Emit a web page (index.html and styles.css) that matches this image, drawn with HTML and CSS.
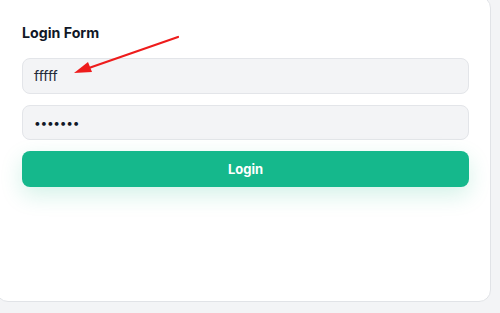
FILE: index.html
```html
<!DOCTYPE html>
<html>
<head>
<meta charset="utf-8">
<link rel="stylesheet" href="styles.css">
</head>
<body>
<div class="card">
  <h2 class="title">Login Form</h2>
  <div class="field">fffff</div>
  <div class="field dots">•••••••</div>
  <button class="btn">Login</button>
  <svg class="arrow" width="120" height="50" viewBox="0 0 120 50">
    <line x1="112" y1="6" x2="20" y2="38" stroke="#ee1c1c" stroke-width="2.2" stroke-linecap="round"/>
    <polygon points="8,42 22,31 26,41" fill="#ee1c1c"/>
  </svg>
</div>
</body>
</html>
```
FILE: styles.css
```css
html, body {
  margin: 0;
  padding: 0;
  background: #f3f4f6;
  overflow: hidden;
}
body {
  font-family: Inter, "Liberation Sans", sans-serif;
  height: 313px;
}
.card {
  position: relative;
  box-sizing: border-box;
  margin: -4px 0 0 -4px;
  width: 495px;
  height: 306px;
  background: #fff;
  border: 1px solid #e1e3e7;
  border-radius: 12px;
  padding: 25px 21px 0 25px;
  display: flex;
  flex-direction: column;
  gap: 11px;
}
.title {
  margin: 0 0 4px 0;
  font-size: 14.2px;
  line-height: 21px;
  font-weight: 700;
  color: #111827;
}
.field {
  box-sizing: border-box;
  height: 35.5px;
  background: #f3f4f6;
  border: 1px solid #e3e5e9;
  border-radius: 8px;
  padding: 0 11px;
  display: flex;
  align-items: center;
  font-size: 14px;
  color: #1f2937;
}
.dots {
  font-size: 12px;
  letter-spacing: -0.3px;
  color: #111827;
}
.btn {
  height: 36px;
  border: none;
  border-radius: 8px;
  background: #15b88c;
  color: #fff;
  font-family: Inter, "Liberation Sans", sans-serif;
  font-weight: 700;
  font-size: 13px;
  box-shadow: 0 8px 22px rgba(16, 185, 129, 0.18);
}
.arrow {
  position: absolute;
  left: 69px;
  top: 34px;
}
```
